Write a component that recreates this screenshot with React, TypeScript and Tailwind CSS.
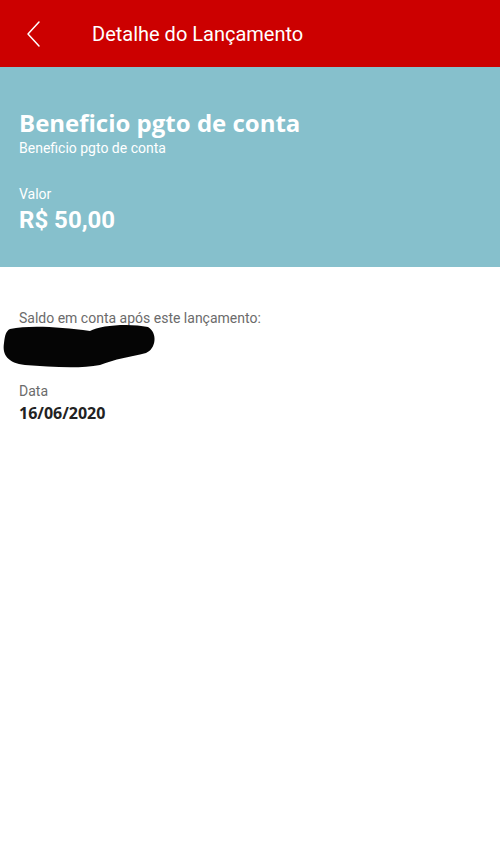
import React from "react";

export default function App() {
  return (
    <div className="w-[500px] h-[862px] bg-white flex flex-col" style={{ fontFamily: "Roboto, 'Liberation Sans', sans-serif" }}>
      <div className="h-[67px] bg-[#cc0000] flex items-center shrink-0">
        <div className="w-[92px] pl-[26px] flex items-center">
          <svg width="16" height="28" viewBox="0 0 16 28" fill="none">
            <path d="M13 2 L2 14 L13 26" stroke="#ffffff" strokeWidth="1.5" strokeLinecap="round" strokeLinejoin="round" />
          </svg>
        </div>
        <span className="text-white text-[20px] leading-none">Detalhe do Lançamento</span>
      </div>
      <div className="h-[200px] bg-[#86c0cc] px-[19px] pt-[40px] text-white shrink-0">
        <div className="text-[24px] leading-[32px] font-bold" style={{ fontFamily: "'Open Sans', sans-serif" }}>Beneficio pgto de conta</div>
        <div className="text-[14px] leading-[17px] mt-[1px]">Beneficio pgto de conta</div>
        <div className="text-[14px] leading-[17px] mt-[29px]">Valor</div>
        <div className="text-[24px] leading-[28px] font-bold mt-[3px]">R$ 50,00</div>
      </div>
      <div className="px-[19px] pt-[43px] relative">
        <div className="text-[14px] leading-[17px] text-[#6b6b6b]">Saldo em conta após este lançamento:</div>
        <div className="h-[56px]" />
        <div className="text-[14px] leading-[17px] text-[#6b6b6b]">Data</div>
        <div className="text-[16px] leading-[22px] font-bold text-[#222222] mt-[2px]" style={{ fontFamily: "'Open Sans', sans-serif" }}>16/06/2020</div>
        <svg className="absolute left-0 top-[54px]" width="160" height="50" viewBox="0 0 160 50">
          <path d="M10 8 C30 4 60 6 90 10 C100 4 130 2 148 6 C158 12 156 28 146 32 C130 36 115 38 100 44 C80 48 50 46 25 44 C8 42 2 34 4 22 C5 14 6 10 10 8 Z" fill="#050505" />
        </svg>
      </div>
    </div>
  );
}
